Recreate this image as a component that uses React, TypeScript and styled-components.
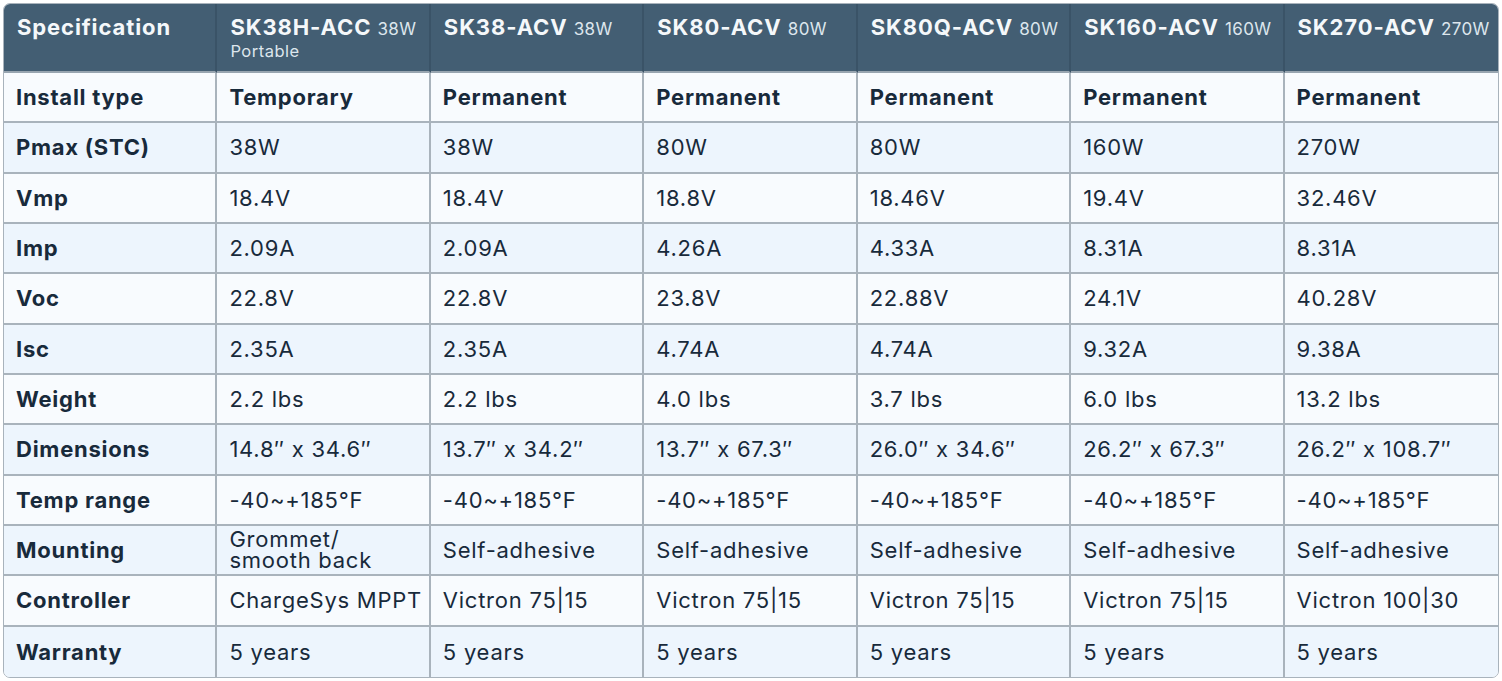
import React from "react";
import styled, { createGlobalStyle } from "styled-components";

const Global = createGlobalStyle`
  html, body { margin: 0; padding: 0; background: #ffffff; }
  body {
    font-family: Inter, "Noto Sans", sans-serif;
  }
`;

const Page = styled.div`
  padding: 3px 3px 3px 3px;
`;

const Frame = styled.div`
  border: 1px solid #a9b3bc;
  border-radius: 7px;
  overflow: hidden;
`;

const Grid = styled.div`
  display: grid;
  grid-template-columns: repeat(7, 1fr);
  grid-template-rows: 69px repeat(12, 1fr);
  height: 673px;
  color: #182a3b;
`;

const RowGroup = styled.div`
  display: contents;
`;

const HeadCell = styled.div<{ $last?: boolean }>`
  background: #435e73;
  color: #f5f8fa;
  padding: 10px 4px 0 13px;
  font-size: 22px;
  font-weight: 700;
  line-height: 27px;
  letter-spacing: 0.9px;
  border-right: ${(p) => (p.$last ? "none" : "2px solid #3a5367")};
  border-bottom: 2px solid #98a5b0;
  white-space: nowrap;
  overflow: hidden;
`;

const Watt = styled.span`
  font-size: 17px;
  font-weight: 400;
  letter-spacing: 0.4px;
  color: #dde6ed;
`;

const Sub = styled.div`
  font-size: 16.5px;
  font-weight: 400;
  line-height: 16px;
  letter-spacing: 0.5px;
  color: #dde6ed;
`;

const Cell = styled.div<{ $alt: boolean; $bold?: boolean; $tight?: boolean; $last?: boolean; $bottom?: boolean }>`
  display: flex;
  align-items: center;
  padding: 0 4px 0 12px;
  background: ${(p) => (p.$alt ? "#edf5fd" : "#f8fbfe")};
  font-size: 22px;
  font-weight: ${(p) => (p.$bold ? 700 : 400)};
  line-height: ${(p) => (p.$tight ? "21px" : "26px")};
  letter-spacing: 0.75px;
  border-right: ${(p) => (p.$last ? "none" : "2px solid #a9b3bc")};
  border-bottom: ${(p) => (p.$bottom ? "none" : "2px solid #a9b3bc")};
  white-space: ${(p) => (p.$tight ? "pre-line" : "nowrap")};
  overflow: hidden;
  min-height: 0;
`;

const models = [
  { name: "SK38H-ACC", w: "38W", sub: "Portable" },
  { name: "SK38-ACV", w: "38W" },
  { name: "SK80-ACV", w: "80W" },
  { name: "SK80Q-ACV", w: "80W" },
  { name: "SK160-ACV", w: "160W" },
  { name: "SK270-ACV", w: "270W" },
];

type RowData = { label: string; values: string[]; bold?: boolean };

const rows: RowData[] = [
  { label: "Install type", values: ["Temporary", "Permanent", "Permanent", "Permanent", "Permanent", "Permanent"], bold: true },
  { label: "Pmax (STC)", values: ["38W", "38W", "80W", "80W", "160W", "270W"] },
  { label: "Vmp", values: ["18.4V", "18.4V", "18.8V", "18.46V", "19.4V", "32.46V"] },
  { label: "Imp", values: ["2.09A", "2.09A", "4.26A", "4.33A", "8.31A", "8.31A"] },
  { label: "Voc", values: ["22.8V", "22.8V", "23.8V", "22.88V", "24.1V", "40.28V"] },
  { label: "Isc", values: ["2.35A", "2.35A", "4.74A", "4.74A", "9.32A", "9.38A"] },
  { label: "Weight", values: ["2.2 lbs", "2.2 lbs", "4.0 lbs", "3.7 lbs", "6.0 lbs", "13.2 lbs"] },
  { label: "Dimensions", values: ["14.8\u2033 x 34.6\u2033", "13.7\u2033 x 34.2\u2033", "13.7\u2033 x 67.3\u2033", "26.0\u2033 x 34.6\u2033", "26.2\u2033 x 67.3\u2033", "26.2\u2033 x 108.7\u2033"] },
  { label: "Temp range", values: Array(6).fill("-40~+185\u00b0F") },
  { label: "Mounting", values: ["Grommet/\nsmooth back", "Self-adhesive", "Self-adhesive", "Self-adhesive", "Self-adhesive", "Self-adhesive"] },
  { label: "Controller", values: ["ChargeSys MPPT", "Victron 75|15", "Victron 75|15", "Victron 75|15", "Victron 75|15", "Victron 100|30"] },
  { label: "Warranty", values: Array(6).fill("5 years") },
];

export default function App() {
  return (
    <Page>
      <Global />
      <Frame>
        <Grid>
          <RowGroup>
            <HeadCell>Specification</HeadCell>
            {models.map((m, i) => (
              <HeadCell key={m.name} $last={i === models.length - 1}>
                {m.name} <Watt>{m.w}</Watt>
                {m.sub && <Sub>{m.sub}</Sub>}
              </HeadCell>
            ))}
          </RowGroup>
          {rows.map((r, i) => {
            const alt = i % 2 === 1;
            const bottom = i === rows.length - 1;
            return (
              <RowGroup key={r.label}>
                <Cell $alt={alt} $bold $bottom={bottom}>
                  {r.label}
                </Cell>
                {r.values.map((v, j) => (
                  <Cell
                    key={j}
                    $alt={alt}
                    $bold={r.bold}
                    $bottom={bottom}
                    $last={j === r.values.length - 1}
                    $tight={v.includes("\n")}
                  >
                    {v}
                  </Cell>
                ))}
              </RowGroup>
            );
          })}
        </Grid>
      </Frame>
    </Page>
  );
}
